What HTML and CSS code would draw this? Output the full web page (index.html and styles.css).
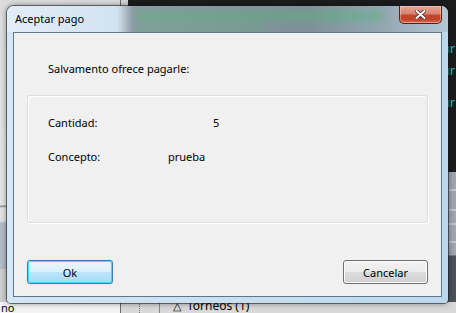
FILE: index.html
```html
<!DOCTYPE html>
<html lang="es">
<head>
  <meta charset="UTF-8">
  <title>Aceptar pago</title>
  <link rel="stylesheet" href="styles.css">
</head>
<body>
  <!-- Aplicación de fondo -->
  <div class="desktop">
    <div class="app-left"></div>
    <div class="app-main">
      <div class="chat">
        <p class="chat-line">ır</p>
        <p class="chat-line">ır</p>
        <p class="chat-line chat-line-late">ır</p>
      </div>
      <div class="user-list"></div>
    </div>
    <div class="app-bottom">
      <span class="bottom-left">no</span>
      <span class="tree">
        <span class="tree-icon">&#9651;</span>
        Torneos (1)
      </span>
    </div>

    <!-- Diálogo -->
    <div class="window">
      <div class="titlebar">
        <div class="glass-blur">
          <span class="blur-line"></span>
          <span class="blur-line blur-line-short"></span>
        </div>
        <span class="title">Aceptar pago</span>
        <button class="close" title="Cerrar">
          <svg width="11" height="9" viewBox="0 0 11 9">
            <path d="M1.5 1 L9.5 8 M9.5 1 L1.5 8" stroke="#4a2020" stroke-width="3.6" stroke-linecap="round"/>
            <path d="M1.5 1 L9.5 8 M9.5 1 L1.5 8" stroke="#ffffff" stroke-width="2" stroke-linecap="round"/>
          </svg>
        </button>
      </div>

      <div class="client">
        <p class="intro">Salvamento ofrece pagarle:</p>
        <div class="group">
          <span class="label">Cantidad:</span>
          <span class="value value-amount">5</span>
          <span class="label">Concepto:</span>
          <span class="value">prueba</span>
        </div>
        <div class="actions">
          <button class="btn btn-default">Ok</button>
          <button class="btn">Cancelar</button>
        </div>
      </div>
    </div>
  </div>
</body>
</html>
```

FILE: styles.css
```css
/* General Reset */
* {
  margin: 0;
  padding: 0;
  box-sizing: border-box;
}

body {
  font-family: 'Noto Sans', 'Open Sans', sans-serif;
  font-size: 11px;
  color: #000;
  background: #1c1c1c;
}

/* Background application */
.desktop {
  position: relative;
  width: 456px;
  height: 313px;
  overflow: hidden;
  display: grid;
  grid-template-columns: 120px 1fr;
  grid-template-rows: 1fr 11px;
}

.app-left {
  background:
    linear-gradient(to bottom,
      #dcdcdc 0, #e6e6e6 205px,
      #8c8c8c 206px, #e4e4e4 208px,
      #e4e4e4 221px, #b4bdc6 223px,
      #b4bdc6 268px, #d0d0d0 270px);
}

.app-main {
  border-left: 1px solid #6a6a6a;
  background: linear-gradient(to right, #d6d6d6 0, #d6d6d6 7px, #1c1c1c 7px);
  display: flex;
  flex-direction: column;
}

.chat {
  flex: 1;
  padding-top: 38px;
  overflow: hidden;
}

.chat-line {
  color: #27c4c8;
  font-size: 12px;
  line-height: 22px;
  text-align: right;
  margin-right: 1px;
}

.chat-line-late {
  margin-top: 10px;
}

.user-list {
  height: 130px;
  background:
    linear-gradient(to bottom,
      #a0a7ae 0, #a0a7ae 17px, #e8e8e8 18px, #a0a7ae 19px,
      #a0a7ae 37px, #e8e8e8 38px, #a0a7ae 39px,
      #a0a7ae 51px, #e8e8e8 52px, #a0a7ae 53px,
      #a0a7ae 69px, #e8e8e8 70px, #a0a7ae 71px,
      #a0a7ae 83px, #4e525a 84px);
}

.app-bottom {
  grid-column: 1 / 3;
  display: grid;
  grid-template-columns: 120px 1fr;
  font-size: 12px;
  line-height: 14px;
  background: linear-gradient(to right, #f4f4f4 0, #f4f4f4 120px, #6a6a6a 120px, #6a6a6a 121px, #d9d9d9 121px);
}

.bottom-left {
  padding-left: 1px;
  font-size: 11px;
  line-height: 11px;
}

.tree {
  margin-left: 19px;
  margin-top: -3px;
  display: flex;
  gap: 6px;
  border-left: 1px dotted #777;
  background: linear-gradient(to right, transparent 19px, #888 19px, #888 20px, transparent 20px);
}

.tree-icon {
  margin-left: 33px;
  font-size: 11px;
}

/* Dialog window (Aero frame) */
.window {
  position: absolute;
  left: 7px;
  top: 6px;
  width: 441px;
  height: 297px;
  border-radius: 7px 7px 4px 4px;
  background: linear-gradient(to right, #d5e6f4 0, #c9dff0 50%, #b9d9ee 100%);
  box-shadow: 0 0 0 1px rgba(20, 30, 40, 0.55), 0 0 6px rgba(0, 0, 0, 0.5);
  display: flex;
  flex-direction: column;
}

.titlebar {
  position: relative;
  height: 26px;
  display: flex;
  align-items: flex-start;
  padding-left: 8px;
  border-radius: 7px 7px 0 0;
  background: linear-gradient(to right,
    #e2edf7 0, #d3e3f1 110px, #8c9ba4 126px,
    #7f8f98 300px, #96a8b4 380px, #b3c6d3 100%);
  overflow: hidden;
}

.glass-blur {
  position: absolute;
  left: 128px;
  top: 6px;
  width: 260px;
  display: flex;
  flex-direction: column;
  gap: 6px;
  filter: blur(4px);
}

.blur-line {
  height: 8px;
  width: 250px;
  background: #4fb874;
  opacity: 0.55;
  border-radius: 4px;
}

.blur-line-short {
  width: 130px;
  opacity: 0.35;
}

.title {
  position: relative;
  margin-top: 5px;
  line-height: 16px;
}

.close {
  position: relative;
  margin-left: auto;
  margin-right: 6px;
  width: 43px;
  height: 18px;
  border: 1px solid #5a2018;
  border-top: none;
  border-radius: 0 0 5px 5px;
  background: linear-gradient(to bottom, #e7a597 0, #d98470 45%, #c5452c 55%, #c2452b 80%, #d8705a 100%);
  box-shadow: inset 0 0 0 1px rgba(255, 220, 210, 0.45);
  display: flex;
  align-items: center;
  justify-content: center;
}

/* Client area */
.client {
  margin: 0 6px;
  height: 265px;
  border: 1px solid #62768a;
  background: #f0f0f0;
  display: flex;
  flex-direction: column;
  padding: 28px 13px 12px;
}

.intro {
  line-height: 16px;
  padding-left: 21px;
}

.group {
  margin-top: 18px;
  height: 128px;
  border: 1px solid #d5dfe5;
  border-radius: 3px;
  box-shadow: inset 1px 1px 0 #fff, 1px 1px 0 #fff;
  display: grid;
  grid-template-columns: 120px auto;
  align-content: start;
  row-gap: 18px;
  padding: 19px 20px 0;
  line-height: 16px;
}

.value-amount {
  margin-left: 45px;
}

.actions {
  margin-top: auto;
  display: flex;
  justify-content: space-between;
}

.btn {
  font: inherit;
  color: #000;
  width: 85px;
  height: 24px;
  border: 1px solid #707070;
  border-radius: 3px;
  background: linear-gradient(to bottom, #f2f2f2 0, #ebebeb 50%, #dddddd 50%, #cfcfcf 100%);
  box-shadow: inset 0 0 0 1px #fcfcfc;
}

.btn-default {
  width: 86px;
  border-color: #3c7fb1;
  background: linear-gradient(to bottom, #eaf6fd 0, #d9f0fc 50%, #bee6fd 50%, #a7d9f5 100%);
  box-shadow: inset 0 0 0 1px #48d7fb, 0 0 1px #48d7fb;
}
```
